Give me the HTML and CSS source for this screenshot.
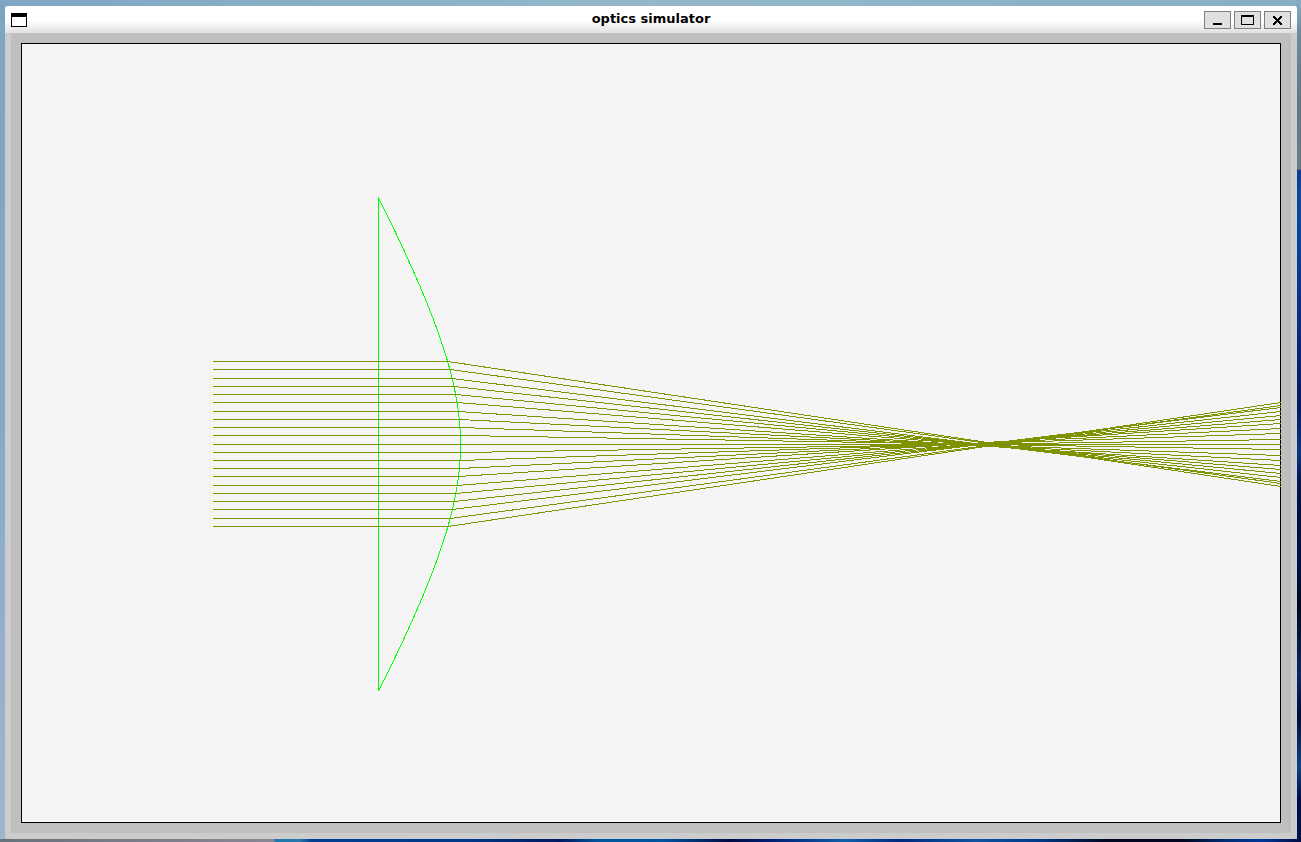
FILE: index.html
```html
<!DOCTYPE html>
<html lang="en">
<head>
<meta charset="utf-8">
<title>optics simulator</title>
<link rel="stylesheet" href="styles.css">
</head>
<body class="desktop">
<main class="window">
  <header class="titlebar">
    <svg class="app-icon" viewBox="0 0 16 14" shape-rendering="crispEdges" aria-hidden="true"><path d="M0 0h16v14H0z"/><path fill="#fff" d="M1 4h14v9H1z"/></svg>
    <h1 class="title">optics simulator</h1>
    <div class="controls">
      <button class="control" type="button" aria-label="Minimize"><svg class="glyph" viewBox="0 0 25 16" shape-rendering="crispEdges"><path d="M8 11h9v2H8z"/></svg></button>
      <button class="control" type="button" aria-label="Maximize"><svg class="glyph" viewBox="0 0 25 16" shape-rendering="crispEdges"><path fill-rule="evenodd" d="M6 3h13v10H6zM7 5v7h11V5z"/></svg></button>
      <button class="control" type="button" aria-label="Close"><svg class="glyph" viewBox="0 0 25 16" shape-rendering="crispEdges"><path d="M8 4h2v1h1v1h1v1h1v-1h1v-1h1v-1h2v2h-1v1h-1v1h-1v1h1v1h1v1h1v2h-2v-1h-1v-1h-1v-1h-1v1h-1v1h-1v1H8v-2h1v-1h1v-1h1v-1h-1v-1H9v-1H8z"/></svg></button>
    </div>
  </header>
  <div class="frame">
    <div class="panel">
      <svg class="scene" id="scene" viewBox="22 44 1258 778" shape-rendering="crispEdges" role="img" aria-label="Parallel rays focused by a lens"></svg>
    </div>
  </div>
</main>
<script src="scene.js"></script>
</body>
</html>
```
FILE: styles.css
```css
* { box-sizing: border-box; }

.desktop {
  margin: 0;
  padding: 6px 4px 3px 5px;
  height: 100vh;
  display: flex;
  background:
    linear-gradient(90deg, #68737c 0, #8b8794 21%, #1b79ab 21.2%, #2678ad 23%, #003f91 24%, #003988 36%, #001a62 43%, #00569c 46%, #0054a0 51%, #000c43 56%, #001d72 59%, #0e60aa 65%, #002b80 69%, #0c559d 75%, #003888 80%, #000720 85%, #00071e 91%, #002b75 94%, #00389a 97%, #000b42) bottom / 100% 3px no-repeat,
    linear-gradient(#88aec6 0, #6d8ba0 4%, #617784 12%, #6d7c85 20%, #073a90 20.3%, #0d479d 23%, #05439c 28%, #0a338c 35%, #001a67 48%, #0a3885 54%, #001652 57%, #000d40 62%, #00114a 67%, #000622 72%, #0b2865 80%, #000a3c 85%, #0b4386 91%, #000a4a 95%, #001347) right / 4px 100% no-repeat,
    linear-gradient(90deg, #7fa7c3, #94b7ca 50%, #88aec6) top / 100% 6px no-repeat,
    linear-gradient(#7ca5c2, #86a9c5 50%, #a0b5cf);
}

.window {
  flex: 1;
  min-width: 0;
  display: flex;
  flex-direction: column;
  border-radius: 3px;
  overflow: hidden;
  background: #ccc;
}

.titlebar {
  height: 27px;
  padding: 0 6px;
  display: grid;
  grid-template-columns: 1fr auto 1fr;
  align-items: center;
  background: linear-gradient(#fff 55%, #e0e0e0);
}

.app-icon { width: 16px; height: 14px; }

.title {
  margin: 0;
  padding-bottom: 2px;
  font: bold 13px/25px "DejaVu Sans", sans-serif;
  color: #000;
}

.controls {
  display: flex;
  justify-content: flex-end;
  gap: 3px;
}

.control {
  width: 27px;
  height: 18px;
  padding: 0;
  border: 1px solid #808080;
  background: #e0e0e0;
}

.glyph { display: block; width: 25px; height: 16px; }

.frame {
  flex: 1;
  min-height: 0;
  display: flex;
  padding: 0 6px 6px;
}

.panel {
  flex: 1;
  min-width: 0;
  display: flex;
  padding: 10px;
  background: #bfbfbf;
}

.scene {
  flex: 1;
  min-width: 0;
  overflow: visible;
  border: 1px solid #000;
  background: #f5f5f5;
}

.ray,
.lens { fill: none; stroke-width: 1px; }

.ray { stroke: #7f9200; }

.lens { stroke: #0f0; }
```
FILE: scene.js
```js
const scene = document.getElementById("scene");
const axis = 444.5;
const vertex = 460.5;

// Hyperbolic front surface: horizontal distance from the vertex at height h.
const sag = (h) => Math.sqrt(82 * 82 + 0.331 * h * h) - 82;

function draw(name, points) {
  const line = document.createElementNS("http://www.w3.org/2000/svg", "polyline");
  line.setAttribute("class", name);
  line.setAttribute("points", points.map((p) => p.join(",")).join(" "));
  scene.append(line);
}

const lens = [[378.5, 690.5], [378.5, 197.5]];
for (let h = -246; h <= 246; h += 6) {
  lens.push([vertex - sag(h), axis + h]);
}
draw("lens", lens);

// Distance of each ray from the axis at the right edge, outermost first.
const reach = [42, 39, 37, 33, 29, 25, 21, 16, 11, 5, 0];
for (let i = -10; i <= 10; i++) {
  const y = Math.floor(444 + i * 8.23) + 0.5;
  const hit = vertex - sag(i * 8.23);
  const end = axis - Math.sign(i) * reach[10 - Math.abs(i)];
  draw("ray", [[213, y], [hit, y], [1281, end]]);
}
```
